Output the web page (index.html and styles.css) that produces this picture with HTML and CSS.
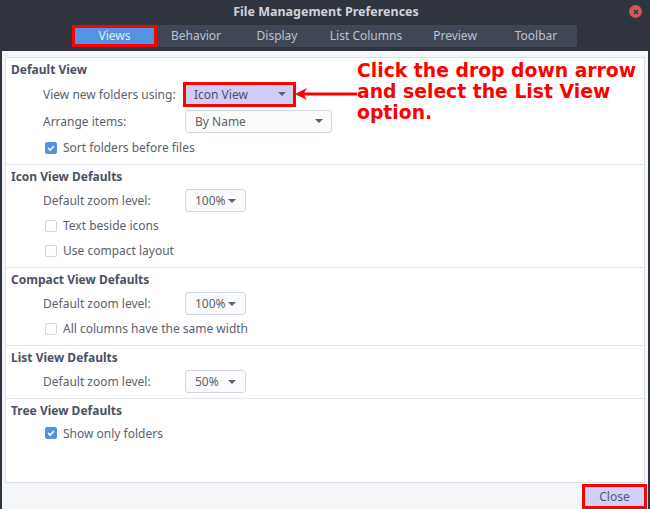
FILE: index.html
```html
<!DOCTYPE html>
<html>
<head>
<meta charset="utf-8">
<link rel="stylesheet" href="styles.css">
</head>
<body>
<div class="window">
  <header class="titlebar">
    <div class="title">File Management Preferences</div>
    <span class="close-dot"><svg width="12" height="12" viewBox="0 0 12 12"><path d="M4 4 L8 8 M8 4 L4 8" stroke="#2f343f" stroke-width="1.6" stroke-linecap="round"/></svg></span>
    <nav class="tabs">
      <span class="tab active">Views</span>
      <span class="tab">Behavior</span>
      <span class="tab">Display</span>
      <span class="tab">List Columns</span>
      <span class="tab">Preview</span>
      <span class="tab">Toolbar</span>
    </nav>
  </header>
  <main class="content">
    <div class="frame">
      <section class="section s1">
        <h3>Default View</h3>
        <div class="row r1"><span class="label">View new folders using:</span><span class="combo highlight wide1">Icon View<i class="caret"></i></span></div>
        <div class="row r2"><span class="label">Arrange items:</span><span class="combo wide2">By Name<i class="caret"></i></span></div>
        <div class="row r3"><span class="cb checked"></span><span class="cblabel">Sort folders before files</span></div>
      </section>
      <section class="section">
        <h3>Icon View Defaults</h3>
        <div class="row"><span class="label">Default zoom level:</span><span class="combo small">100%<i class="caret"></i></span></div>
        <div class="row"><span class="cb"></span><span class="cblabel">Text beside icons</span></div>
        <div class="row"><span class="cb"></span><span class="cblabel">Use compact layout</span></div>
      </section>
      <section class="section">
        <h3>Compact View Defaults</h3>
        <div class="row"><span class="label">Default zoom level:</span><span class="combo small">100%<i class="caret"></i></span></div>
        <div class="row"><span class="cb"></span><span class="cblabel">All columns have the same width</span></div>
      </section>
      <section class="section">
        <h3>List View Defaults</h3>
        <div class="row"><span class="label">Default zoom level:</span><span class="combo small">50%<i class="caret"></i></span></div>
      </section>
      <section class="section last">
        <h3>Tree View Defaults</h3>
        <div class="row r-tree"><span class="cb checked"></span><span class="cblabel">Show only folders</span></div>
      </section>
    </div>
    <div class="buttons"><button class="btn-close">Close</button></div>
  </main>
  <div class="annotation">
    <svg class="arrow" width="64" height="14" viewBox="0 0 64 14"><path d="M1 7 L13 1 L10 6 L62 6 L62 8 L10 8 L13 13 Z" fill="#f00"/><rect x="8" y="5.5" width="55" height="3" fill="#f00"/></svg>
    <p class="note">Click the drop down arrow<br>and select the List View<br>option.</p>
  </div>
</div>
</body>
</html>
```

FILE: styles.css
```css
* { box-sizing: border-box; }
html, body { margin: 0; padding: 0; }
body {
  width: 650px; height: 509px; overflow: hidden;
  background: #2f343f;
  font-family: "Noto Sans", "Open Sans", sans-serif;
  font-size: 12px;
  color: #5c616c;
}
.window {
  position: relative;
  width: 650px; height: 509px;
  display: flex; flex-direction: column;
  background: #2f343f;
}
.titlebar {
  position: relative;
  height: 51px;
  flex: none;
  display: flex; flex-direction: column; align-items: center;
  background: #2f343f;
}
.title {
  margin-top: 3px;
  height: 18px; line-height: 18px;
  font-weight: bold; font-size: 12.5px;
  color: #cfd3dc;
  padding-left: 2px;
}
.close-dot {
  position: absolute; right: 8px; top: 5px;
  width: 13px; height: 13px; border-radius: 50%;
  background: #cc575d;
  display: flex; align-items: center; justify-content: center;
}
.close-dot svg { width: 10px; height: 10px; }
.tabs {
  margin-top: 4px;
  margin-left: -1px;
  width: 505px; height: 22px;
  display: flex;
  background: #414654;
  border-radius: 2px;
}
.tab {
  flex: none;
  height: 22px; line-height: 22px;
  text-align: center;
  color: #bac3cf;
  font-size: 12px;
}
.tab:nth-child(1) { width: 85px; }
.tab:nth-child(2) { width: 78px; }
.tab:nth-child(3) { width: 84px; }
.tab:nth-child(4) { width: 94px; }
.tab:nth-child(5) { width: 84px; }
.tab:nth-child(6) { width: 78px; }
.tab.active {
  background: #5294e2;
  color: #e4e8f6;
  border: 3px solid #f00;
  line-height: 16px;
}
.content {
  flex: 1;
  background: #f5f6f7;
  margin: 0 2px 0 2px;
  display: flex; flex-direction: column;
  padding: 6px 3px 0 3px;
}
.frame {
  height: 426px;
  background: #fff;
  border: 1px solid #dcdfe3;
}
.section {
  border-bottom: 1px solid #e3e5e8;
  padding: 3px 0 4px 5px;
}
.section.last { border-bottom: none; }
.section h3 {
  margin: 0 0 2px 0;
  height: 18px; line-height: 18px;
  font-size: 12px; font-weight: bold;
  color: #4b5162;
}
.row {
  height: 25px;
  display: flex; align-items: center;
  padding-left: 32px;
}
.s1 .r1 { height: 26px; }
.s1 .r2 { height: 28px; }
.s1 .r3 { height: 25px; }
.r-tree { height: 22px; }
.label { width: 142px; flex: none; color: #5c616c; }
.combo {
  position: relative;
  display: flex; align-items: center;
  height: 23px;
  padding-left: 9px;
  border: 1px solid #cfd6e6;
  border-radius: 3px;
  background: #fbfbfc;
  color: #5c616c;
}
.combo.wide2 { width: 147px; }
.combo.small { width: 61px; height: 23px; }
.combo.highlight {
  width: 113px; height: 25px;
  margin-left: -2px;
  padding-left: 8px;
  border: 3px solid #f00;
  border-radius: 0;
  background: #cfcdf9;
  color: #4b5162;
}
.caret {
  position: absolute; right: 10px; top: 50%;
  margin-top: -2px;
  width: 0; height: 0;
  border-left: 4px solid transparent;
  border-right: 4px solid transparent;
  border-top: 4px solid #5c616c;
}
.combo.wide2 .caret { right: 8px; }
.combo.small .caret { right: 9px; }
.combo.highlight .caret { right: 7px; }
.cb {
  width: 12px; height: 12px; flex: none;
  margin-left: 2px; margin-right: 6px;
  border: 1px solid #cfd6e6;
  border-radius: 2px;
  background: #fff;
}
.cb.checked {
  border-color: #5294e2;
  background: #5294e2 url("data:image/svg+xml;utf8,<svg xmlns='http://www.w3.org/2000/svg' width='12' height='12' viewBox='0 0 12 12'><path d='M2.5 6 L5 8.5 L9.5 3.5' fill='none' stroke='white' stroke-width='1.8'/></svg>") center/10px 10px no-repeat;
}
.cblabel { color: #5c616c; }
.buttons {
  display: flex; justify-content: flex-end;
  padding-top: 1px;
}
.btn-close {
  width: 65px; height: 25px;
  margin-right: -2px;
  border: 3px solid #f00;
  background: #d3d0f8;
  color: #4f5879;
  font-family: "Noto Sans", "Open Sans", sans-serif;
  font-size: 12px;
  padding: 0;
}
.annotation {
  position: absolute;
  left: 294px; top: 60px;
  display: flex; align-items: flex-start;
}
.arrow { margin-top: 27px; flex: none; }
.note {
  margin: 0 0 0 -1px;
  font-family: "DejaVu Sans", sans-serif;
  font-weight: bold;
  font-size: 18.8px;
  line-height: 21px;
  color: #f00;
}
```
